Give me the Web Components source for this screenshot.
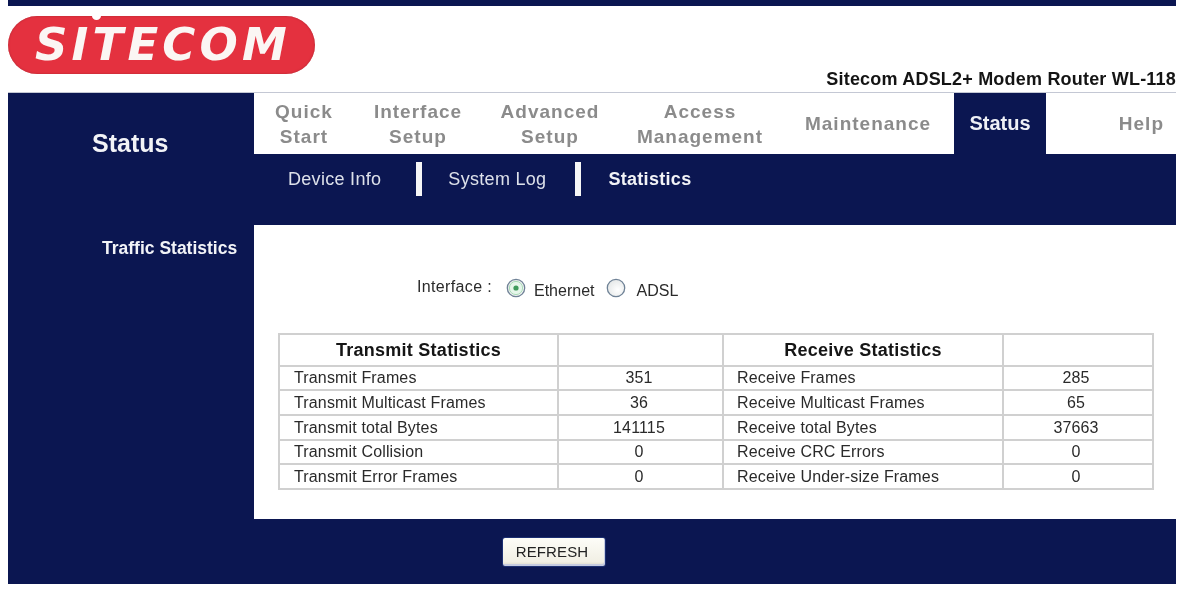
<!DOCTYPE html>
<html>
<head>
<meta charset="utf-8">
<title>Sitecom Status</title>
<style>
  html, body { margin: 0; background: #fff; }
  body { padding: 0 8px; font-family: "Liberation Sans", Arial, sans-serif; --navy: #0b1651; }
</style>
</head>
<body>
<router-page>
  <router-header slot="header" model="Sitecom ADSL2+ Modem Router WL-118"></router-header>
  <side-menu slot="side" title-text="Status" item="Traffic Statistics"></side-menu>
  <main-nav slot="nav"></main-nav>
  <sub-nav slot="sub"></sub-nav>
  <traffic-panel slot="content"></traffic-panel>
  <refresh-bar slot="footer"></refresh-bar>
</router-page>

<script>
class RouterPage extends HTMLElement {
  constructor() {
    super()
    this.attachShadow({ mode: 'open' }).innerHTML = `
      <style>
        :host { display: block; filter: blur(.35px); }
        .bar { height: 6px; background: var(--navy); }
        .body {
          display: grid;
          grid-template-columns: 246px 1fr;
          grid-template-rows: 61px 71px 294px 65px;
          background: var(--navy);
        }
        .side { grid-row: 1 / 5; }
      </style>
      <div class="bar"></div>
      <slot name="header"></slot>
      <div class="body">
        <div class="side"><slot name="side"></slot></div>
        <slot name="nav"></slot>
        <slot name="sub"></slot>
        <slot name="content"></slot>
        <slot name="footer"></slot>
      </div>
    `
  }
}

class RouterHeader extends HTMLElement {
  constructor() {
    super()
    this.attachShadow({ mode: 'open' }).innerHTML = `
      <style>
        :host {
          display: flex;
          justify-content: space-between;
          align-items: flex-end;
          height: 87px;
          box-sizing: border-box;
          padding-top: 10px;
          border-bottom: 1px solid #c4c8d4;
        }
        .logo {
          position: relative;
          align-self: flex-start;
          width: 307px;
          height: 58px;
          border-radius: 29px;
          background: #e4313f;
          box-shadow: inset 0 0 2px #a5262f;
          display: flex;
          align-items: center;
          justify-content: center;
          overflow: hidden;
        }
        .logo span {
          font: italic bold 45px "DejaVu Sans", sans-serif;
          letter-spacing: 4.2px;
          color: #fbf6f4;
          line-height: 1;
          margin-top: -1px;
          margin-left: 3px;
        }
        .logo i {
          position: absolute;
          left: 84px;
          top: -4px;
          width: 9px;
          height: 8px;
          border-radius: 50%;
          background: #fff;
        }
        .model { font-size: 18px; font-weight: bold; letter-spacing: .2px; color: #141414; padding-bottom: 2px; white-space: nowrap; }
      </style>
      <div class="logo"><span>SITECOM</span><i></i></div>
      <div class="model">${this.getAttribute('model')}</div>
    `
  }
}

class SideMenu extends HTMLElement {
  constructor() {
    super()
    this.attachShadow({ mode: 'open' }).innerHTML = `
      <style>
        :host { display: block; color: #f2f3f7; font-weight: bold; }
        h1 { margin: 0; padding: 36px 0 0 84px; font-size: 25px; line-height: 28px; }
        p { margin: 0; padding: 81px 0 0 94px; font-size: 17.5px; line-height: 20px; white-space: nowrap; }
      </style>
      <h1>${this.getAttribute('title-text')}</h1>
      <p>${this.getAttribute('item')}</p>
    `
  }
}

class MainNav extends HTMLElement {
  constructor() {
    super()
    const items = [
      ['Quick<br>Start', 100], ['Interface<br>Setup', 128], ['Advanced<br>Setup', 136],
      ['Access<br>Management', 164], ['Maintenance', 172], ['Status', 92, 'on'], ['Help', 130, 'help']
    ]
    this.attachShadow({ mode: 'open' }).innerHTML = `
      <style>
        :host {
          display: flex;
          background: #fff;
          font-size: 19px;
          line-height: 25px;
          font-weight: bold;
          letter-spacing: 1px;
          color: #8b8b8b;
          text-align: center;
        }
        div { display: flex; align-items: center; justify-content: center; box-sizing: border-box; }
        .on { background: var(--navy); color: #eef0f6; letter-spacing: 0; font-size: 20px; }
        .help { justify-content: flex-end; padding-right: 12px; }
      </style>
      ${items.map(([t, w, c]) => `<div class="${c || ''}" style="width:${w}px">${t}</div>`).join('')}
    `
  }
}

class SubNav extends HTMLElement {
  constructor() {
    super()
    this.attachShadow({ mode: 'open' }).innerHTML = `
      <style>
        :host {
          display: flex;
          align-items: flex-start;
          padding: 8px 0 0 34px;
          font-size: 18px;
          letter-spacing: .3px;
          line-height: 34px;
          height: 71px;
          box-sizing: border-box;
          color: #dde1ea;
          background: var(--navy);
        }
        span { white-space: nowrap; }
        i { width: 6px; height: 34px; background: #f6f6f6; }
        b { color: #f2f3f7; }
      </style>
      <span style="margin-right:35px">Device Info</span><i></i>
      <span style="margin:0 29px 0 26px">System Log</span><i></i>
      <b style="margin-left:27px">Statistics</b>
    `
  }
}

class RadioDot extends HTMLElement {
  constructor() {
    super()
    const on = this.hasAttribute('checked')
    this.attachShadow({ mode: 'open' }).innerHTML = `
      <style>
        :host { display: inline-flex; width: 20px; height: 20px; position: relative; top: -1px; }
      </style>
      <svg viewBox="0 0 20 20" width="20" height="20">
        <defs>
          <radialGradient id="g" cx="60%" cy="60%" r="70%">
            <stop offset="0" stop-color="#ffffff"/><stop offset="1" stop-color="#e2e5e5"/>
          </radialGradient>
        </defs>
        <circle cx="10" cy="10" r="8.7" fill="url(#g)" stroke="#6f8296" stroke-width="1.3"/>
        ${on ? '<circle cx="10" cy="10" r="6.6" fill="#e6f6ea" stroke="#a9dcb8" stroke-width="1"/><circle cx="10" cy="10" r="2.6" fill="#3f9a5c"/>' : ''}
      </svg>
    `
  }
}

class StatsTable extends HTMLElement {
  constructor() {
    super()
    const rows = [
      ['Transmit Frames', '351', 'Receive Frames', '285', 24],
      ['Transmit Multicast Frames', '36', 'Receive Multicast Frames', '65', 25],
      ['Transmit total Bytes', '141115', 'Receive total Bytes', '37663', 25],
      ['Transmit Collision', '0', 'Receive CRC Errors', '0', 24],
      ['Transmit Error Frames', '0', 'Receive Under-size Frames', '0', 25]
    ]
    this.attachShadow({ mode: 'open' }).innerHTML = `
      <style>
        :host { display: block; width: 874px; }
        table { border-collapse: collapse; table-layout: fixed; width: 874px; color: #2a2a2a; font-size: 16px; letter-spacing: .15px; }
        th, td { border: 2px solid #d0d0d0; padding: 0; }
        th { height: 30px; font-size: 18px; letter-spacing: .25px; color: #151515; }
        td { line-height: 20px; text-align: center; }
        td.l { text-align: left; padding-left: 14px; }
        td.l2 { text-align: left; padding-left: 13px; }
        td.n { padding-right: 3px; }
        td.m { padding-right: 4px; }
      </style>
      <table>
        <colgroup><col style="width:279px"><col style="width:165px"><col style="width:280px"><col style="width:150px"></colgroup>
        <tr><th>Transmit Statistics</th><th></th><th>Receive Statistics</th><th></th></tr>
        ${rows.map(r => `<tr style="height:${r[4]}px"><td class="l">${r[0]}</td><td class="n">${r[1]}</td><td class="l2">${r[2]}</td><td class="m">${r[3]}</td></tr>`).join('')}
      </table>
    `
  }
}

class TrafficPanel extends HTMLElement {
  constructor() {
    super()
    this.attachShadow({ mode: 'open' }).innerHTML = `
      <style>
        :host {
          display: block;
          background: #fff;
          box-sizing: border-box;
          height: 294px;
          padding: 52px 0 0 24px;
          color: #2a2a2a;
          font-size: 16px;
        }
        .iface { display: flex; align-items: center; height: 24px; padding-left: 139px; margin-bottom: 32px; white-space: nowrap; }
        .lbl { position: relative; top: -2px; margin-right: 14px; letter-spacing: .35px; }
        .opt { position: relative; top: 2px; margin: 0 12px 0 8px; }
      </style>
      <div class="iface">
        <span class="lbl">Interface :</span>
        <radio-dot checked></radio-dot><span class="opt">Ethernet</span>
        <radio-dot></radio-dot><span class="opt" style="margin-right:0;margin-left:10px">ADSL</span>
      </div>
      <stats-table></stats-table>
    `
  }
}

class RefreshBar extends HTMLElement {
  constructor() {
    super()
    this.attachShadow({ mode: 'open' }).innerHTML = `
      <style>
        :host { display: block; background: var(--navy); padding: 18px 0 0 248px; box-sizing: border-box; height: 65px; }
        button {
          display: block;
          width: 104px;
          height: 30px;
          padding: 0 4px 2px 0;
          border: 1px solid #1c2f72;
          border-radius: 3px;
          background: linear-gradient(#fdfdf8, #f1efe4 85%, #d9d5c6);
          box-shadow: inset -1px -2px 0 #c6cbe0;
          font: 15px "Liberation Sans", Arial, sans-serif;
          letter-spacing: .1px;
          color: #222;
        }
      </style>
      <button>REFRESH</button>
    `
  }
}

customElements.define('router-page', RouterPage)
customElements.define('router-header', RouterHeader)
customElements.define('side-menu', SideMenu)
customElements.define('main-nav', MainNav)
customElements.define('sub-nav', SubNav)
customElements.define('radio-dot', RadioDot)
customElements.define('stats-table', StatsTable)
customElements.define('traffic-panel', TrafficPanel)
customElements.define('refresh-bar', RefreshBar)
</script>
</body>
</html>
